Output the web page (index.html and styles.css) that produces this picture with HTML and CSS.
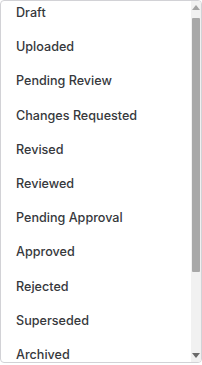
FILE: index.html
```html
<!DOCTYPE html>
<html>
<head>
<meta charset="utf-8">
<link rel="stylesheet" href="styles.css">
</head>
<body>
<div class="dropdown">
  <div class="viewport">
    <ul class="list">
      <li class="item">Draft</li>
      <li class="item">Uploaded</li>
      <li class="item">Pending Review</li>
      <li class="item">Changes Requested</li>
      <li class="item">Revised</li>
      <li class="item">Reviewed</li>
      <li class="item">Pending Approval</li>
      <li class="item">Approved</li>
      <li class="item">Rejected</li>
      <li class="item">Superseded</li>
      <li class="item">Archived</li>
    </ul>
  </div>
  <div class="scrollbar">
    <div class="arrow arrow-up"></div>
    <div class="track"><div class="thumb"></div></div>
    <div class="arrow arrow-down"></div>
  </div>
</div>
</body>
</html>
```
FILE: styles.css
```css
html, body {
  margin: 0;
  padding: 0;
  background: #ffffff;
}
.dropdown {
  box-sizing: border-box;
  width: 202px;
  height: 363px;
  border: 1px solid #d2d2d6;
  border-radius: 4px;
  display: flex;
  overflow: hidden;
  background: #ffffff;
  font-family: Inter, "Noto Sans", sans-serif;
}
.viewport {
  flex: 1;
  overflow: hidden;
}
.list {
  list-style: none;
  margin: -5px 0 0 0;
  padding: 0;
}
.item {
  height: 34.2px;
  line-height: 34.2px;
  padding-left: 15px;
  font-size: 12.6px;
  font-weight: 450;
  color: #36383c;
  white-space: nowrap;
}
.scrollbar {
  width: 10px;
  background: #f1f1f1;
  display: flex;
  flex-direction: column;
  align-items: center;
}
.arrow {
  width: 0;
  height: 0;
  border-left: 4px solid transparent;
  border-right: 4px solid transparent;
}
.arrow-up {
  margin-top: 4px;
  border-bottom: 5px solid #a3a3a3;
}
.arrow-down {
  margin-bottom: 4px;
  border-top: 5px solid #6a6a6a;
}
.track {
  flex: 1;
  width: 100%;
  display: flex;
  justify-content: center;
}
.thumb {
  margin-top: 8px;
  width: 8px;
  height: 254px;
  border-radius: 1px;
  background: #a8a8a8;
}
```
